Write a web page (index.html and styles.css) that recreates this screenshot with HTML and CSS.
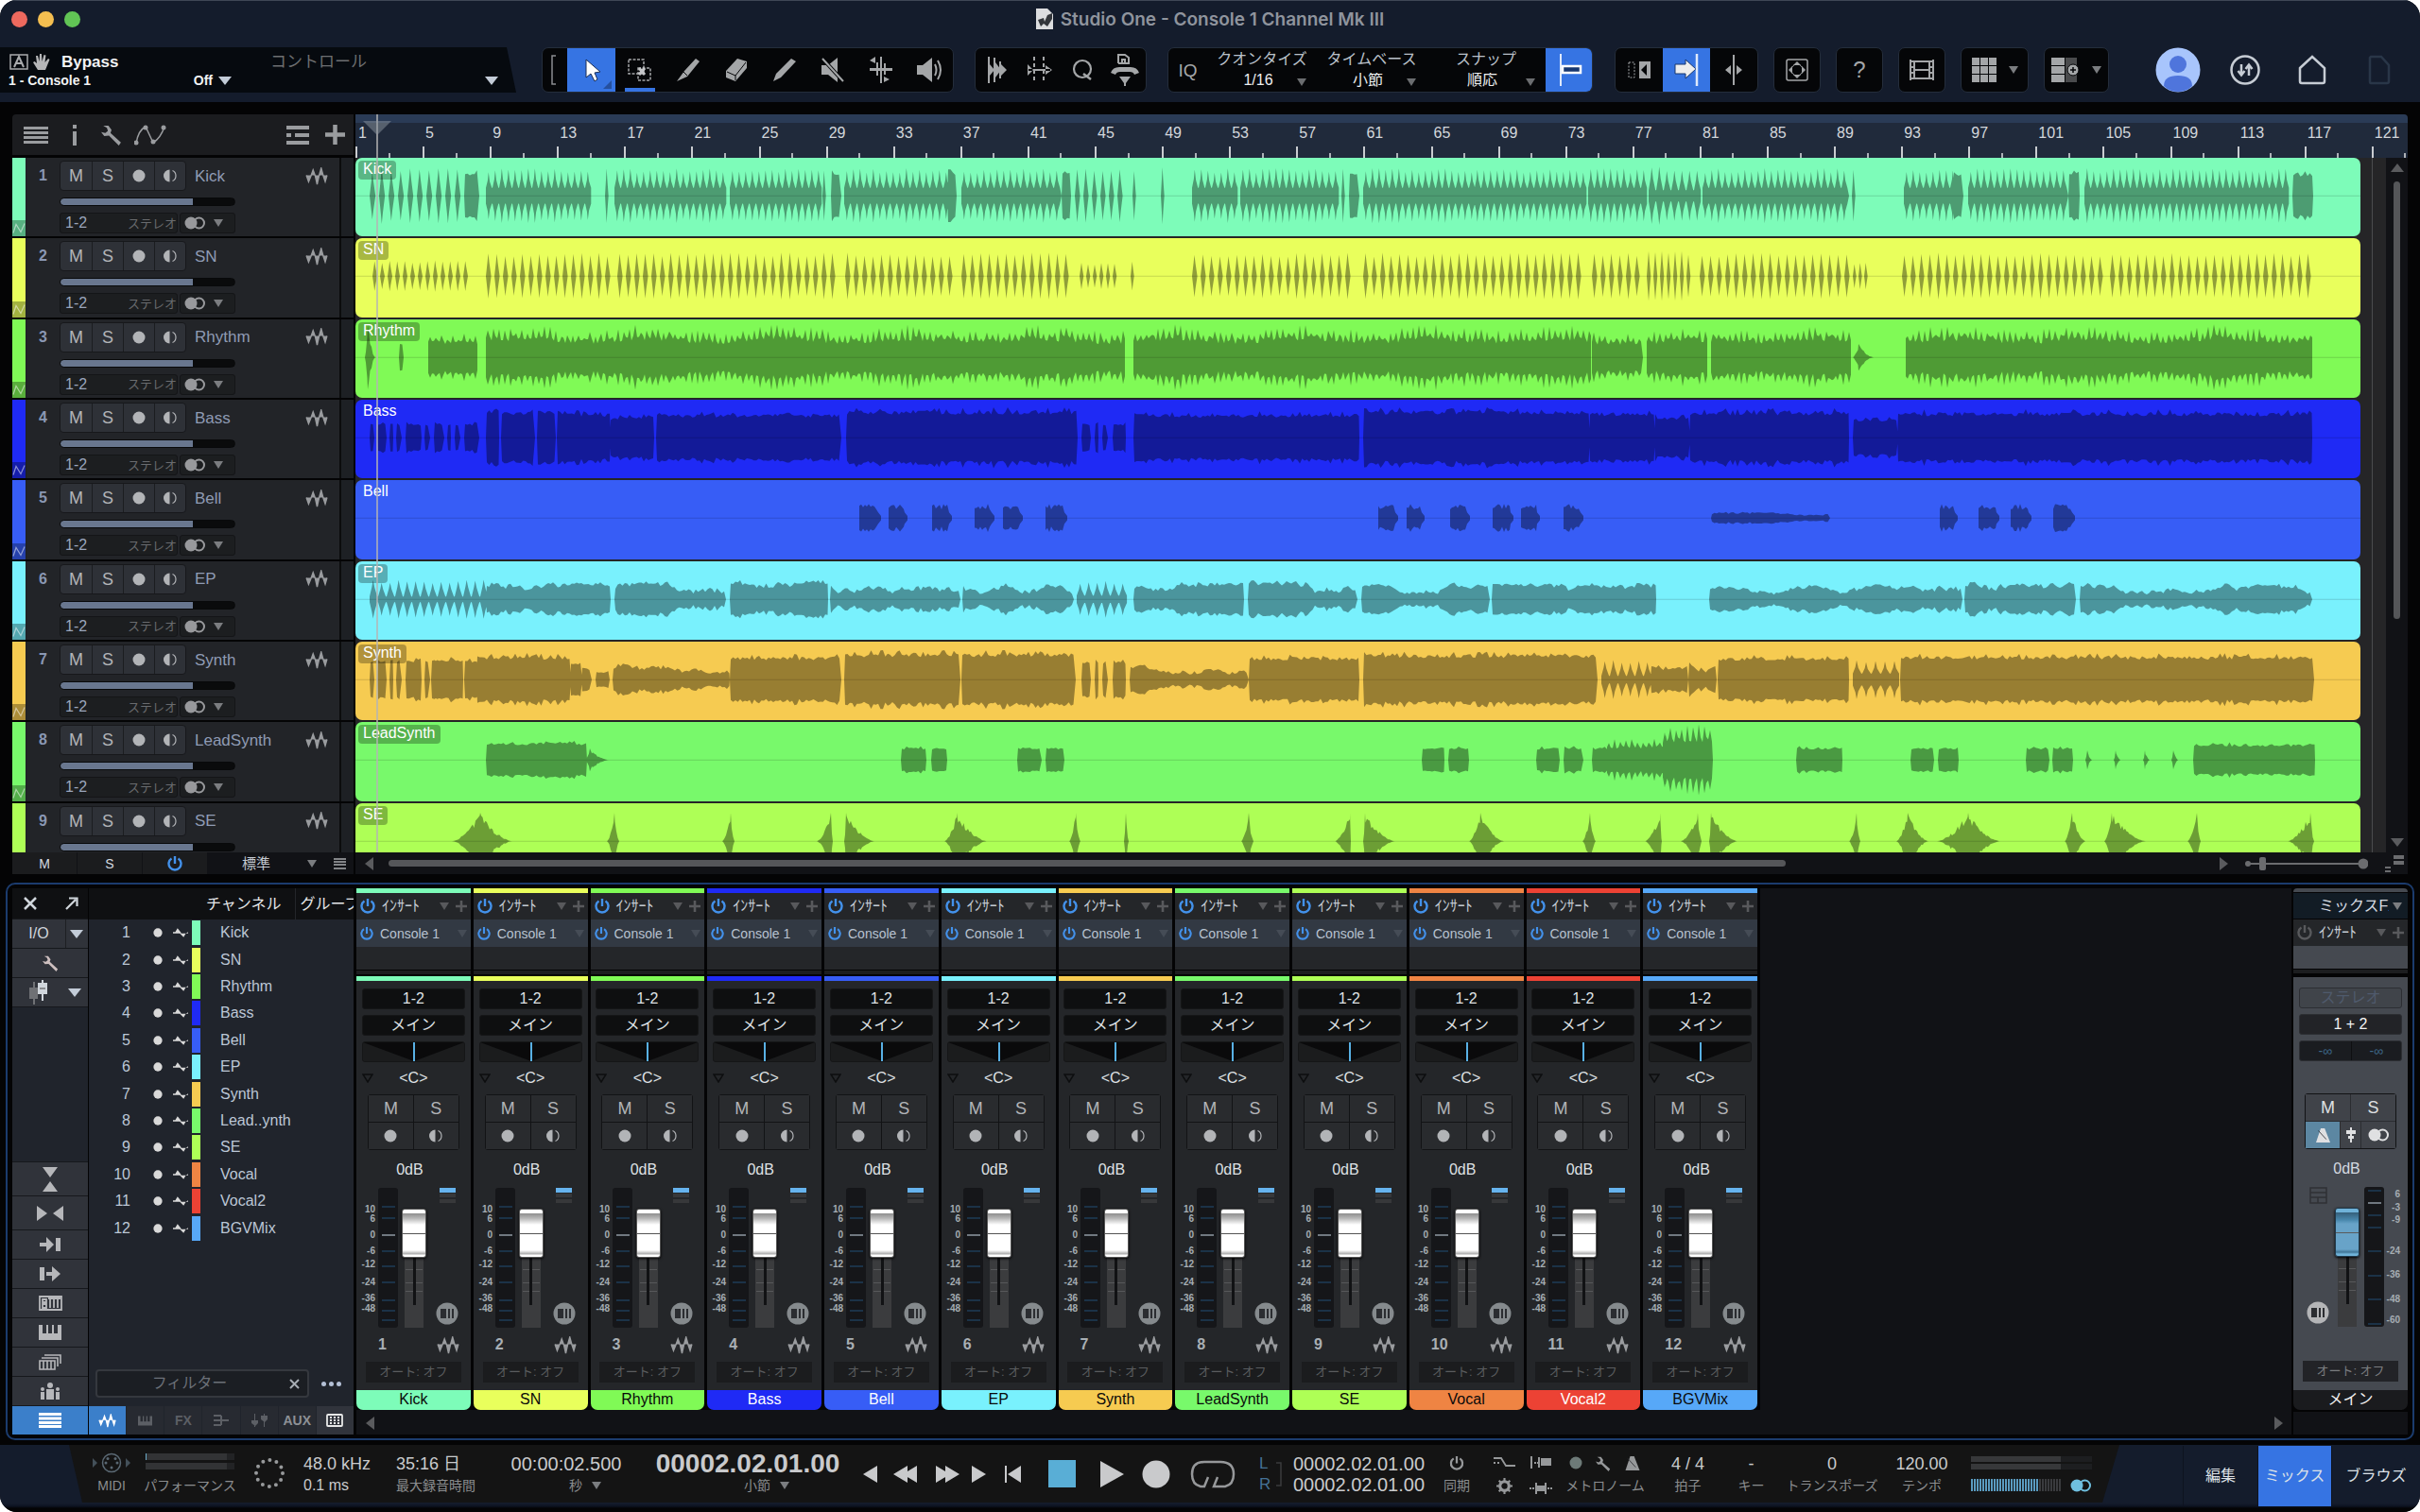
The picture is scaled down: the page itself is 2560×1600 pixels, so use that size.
FILE: index.html
```html
<!DOCTYPE html>
<html lang="ja">
<head>
    <meta charset="UTF-8">
    <meta name="viewport" content="width=device-width, initial-scale=1.0">
    <title>Studio One - Console 1 Channel Mk III</title>
    <link rel="stylesheet" href="styles.css">
</head>
<body>
    <!-- Icon sheet -->
    <svg class="icon-sheet" aria-hidden="true">
        <symbol id="i-wave" viewBox="0 0 24 20"><path d="M0.500 9L3 16L5.500 10L8 3L10.500 10L12.500 19L14.500 10L17 1L19.500 10L21.500 16L23.500 9" stroke="currentColor" stroke-width="1.500"/></symbol>
        <symbol id="i-dot" viewBox="0 0 14 14"><circle cx="7" cy="7" r="6.500"/></symbol>
        <symbol id="i-mon" viewBox="0 0 14 14"><path d="M6.500 0.500A6.500 6.500 0 0 0 6.500 13.500Z"/><path d="M9.500 1.500Q13 3 13 7Q13 11 9.500 12.500" fill="none" stroke="currentColor" stroke-width="1.200"/></symbol>
        <symbol id="i-stereo" viewBox="0 0 24 14"><circle cx="8" cy="7" r="6.500"/><circle cx="16.500" cy="7" r="5.500" fill="none" stroke="currentColor" stroke-width="2"/></symbol>
        <symbol id="i-power" viewBox="0 0 16 16"><path d="M4.500 2.500A6.500 6.500 0 1 0 11.500 2.500M8 0V8" fill="none" stroke="currentColor" stroke-width="2.400"/></symbol>
        <symbol id="i-wrench" viewBox="0 0 20 20"><path d="M2 1L7 1L10 5L9 8L19 17L17 20L7.500 10.500L3 11L0 7L4 8L6.500 6L5.500 3Z"/></symbol>
        <symbol id="i-rack" viewBox="0 0 24 24"><circle cx="12" cy="12" r="11.500"/><path d="M5 7h6v10H5zM13 7h2v10h-2zM17 7h2v10h-2z" class="ink"/></symbol>
        <symbol id="i-plus" viewBox="0 0 14 14"><path d="M5.500 0h3v5.500H14v3H8.500V14h-3V8.500H0v-3h5.500z"/></symbol>
        <symbol id="i-sine" viewBox="0 0 20 12"><path d="M0 7V5L3 5L6 0L10 5L11 7H17L20 5V7L17 7L14 12L9 7Z"/></symbol>
        <symbol id="i-metro" viewBox="0 0 18 18"><path d="M6 0h5l7 18H0z"/><path d="M3 3L13 14" class="ink-line"/></symbol>
        <symbol id="i-auto" viewBox="0 0 14 14"><path d="M1 12L4 3L9 11L13 2" fill="none" stroke="#fff" stroke-opacity=".5" stroke-width="1.200"/></symbol>
        <symbol id="i-lines" viewBox="0 0 26 18"><path d="M0 0h26v3H0zM0 5h26v3H0zM0 10h26v3H0zM0 15h26v3H0z"/></symbol>
        <symbol id="i-keys" viewBox="0 0 24 16"><path d="M0 0H4V9H8V0H10V9H14V0H16V9H20V0H24V16H0Z"/></symbol>
    </svg>

    <div class="window">
        <header class="top">
            <div class="titlebar">
                <div class="lights"><i class="red"></i><i class="amber"></i><i class="green"></i></div>
                <h1>
                    <svg width="18" height="22" viewBox="0 0 18 22"><path d="M0 0h12l6 6v16H0z" fill="#dcdddf"/><path d="M2 12l6-2 1 4 3-7 5-2v6l-5 8-4-3-3 3z" fill="#33363b"/></svg>
                    Studio One - Console 1 Channel Mk III
                </h1>
            </div>
            <div class="toolbar">
                <div class="param">
                    <div class="param-name">
                        <svg width="20" height="17" viewBox="0 0 20 17"><rect x="1" y="1" width="18" height="15" fill="none" stroke="#a9abad" stroke-width="1.500"/><path d="M5 14L10 3L15 14M7 10H13" fill="none" stroke="#a9abad" stroke-width="2"/></svg>
                        <svg width="18" height="17" viewBox="0 0 18 17"><path d="M5 17L0 9L1.500 8L4 10L3 2L5 2L6.500 8L7 0H9L9.500 8L11.500 1L13.500 1.500L12.500 9L16 5L17.500 6L13 17Z" fill="#b5b6b8"/></svg>
                        <b>Bypass</b>
                    </div>
                    <div class="param-val"><b>1 - Console 1</b><b class="off">Off</b><i class="tri big"></i></div>
                    <span class="control">コントロール</span>
                    <i class="tri big last"></i>
                </div>

                <div class="group tools">
                    <svg width="26" height="46" viewBox="0 0 26 46"><path d="M14 8H10V38H14" fill="none" stroke="#8b8d90" stroke-width="1.500"/></svg>
                    <button class="tool on" aria-label="矢印"><svg width="50" height="46" viewBox="0 0 50 46"><path d="M19 12V31L24 27L28 35L31 33L28 26L34 25Z" fill="#fff" stroke="#1a2d55"/><path d="M46 34V43H37Z" fill="#25509f"/></svg></button>
                    <button class="tool tabbed" aria-label="範囲"><svg width="28" height="26" viewBox="0 0 28 26"><path d="M2 2H18V17H2ZM12 11H25V24H12Z" fill="none" stroke="#a4a6a8" stroke-width="1.500" stroke-dasharray="3 1.500"/><path d="M13 11L19 18M19 11L13 18" stroke="#c4c5c7" stroke-width="3"/></svg></button>
                    <button class="tool" aria-label="分割"><svg width="26" height="26" viewBox="0 0 26 26"><path d="M21 1L25 4L12 20L1 25L9 14Z"/><path d="M8 15L12 19" stroke="#050608"/></svg></button>
                    <button class="tool" aria-label="消しゴム"><svg width="26" height="24" viewBox="0 0 26 24"><path d="M14 0L24 3V10L12 24L2 20V13Z"/><path d="M3 14L12 18L23 4M12 18V23" stroke="#050608" fill="none"/></svg></button>
                    <button class="tool" aria-label="ペイント"><svg width="26" height="26" viewBox="0 0 26 26"><path d="M20 1L25 4L9 21L1 25L4 17Z"/></svg></button>
                    <button class="tool" aria-label="ミュート"><svg width="26" height="26" viewBox="0 0 26 26"><path d="M1 8H8L18 0V26L8 18H1Z"/><path d="M2 1L24 25" stroke="#050608" stroke-width="4"/><path d="M2 1L24 25" stroke="#a4a6a8" stroke-width="2"/></svg></button>
                    <button class="tool" aria-label="ベンド"><svg width="26" height="28" viewBox="0 0 26 28"><path d="M12 0h2v28h-2zM8 6h2v14H8zM16 7h2v12h-2zM1 12h24v3H1zM7 0v7l-6-3zM16 21l6 3-6 3z"/></svg></button>
                    <button class="tool" aria-label="試聴"><svg width="28" height="26" viewBox="0 0 28 26"><path d="M1 8H7L17 0V26L7 18H1Z"/><path d="M20 7Q23 13 20 19M23 3Q29 13 23 23" fill="none" stroke="#a4a6a8" stroke-width="2"/></svg></button>
                </div>

                <div class="group edits">
                    <button class="tool" aria-label="トランジェント"><svg width="22" height="30" viewBox="0 0 22 30"><path d="M1 1h2v28H1zM7 2h2v26H7zM13 6h2v18h-2zM3 9l5 6-5 6zM9 7l6 8-6 8zM15 9l6 6-6 6z"/></svg></button>
                    <button class="tool" aria-label="ストレッチ"><svg width="28" height="28" viewBox="0 0 28 28"><path d="M8 0V28M18 0V28" stroke="#a4a6a8" stroke-width="2" stroke-dasharray="4 3"/><path d="M1 8v12l6-6zM27 14l-7-5v10zM2 13h23v2H2z"/></svg></button>
                    <button class="tool" aria-label="クオンタイズ適用"><svg width="22" height="24" viewBox="0 0 22 24"><circle cx="11" cy="11" r="9" fill="none" stroke="#a4a6a8" stroke-width="2.200"/><path d="M12 16L20 22" stroke="#a4a6a8" stroke-width="2.500"/></svg></button>
                    <button class="tool" aria-label="マクロ"><svg width="32" height="34" viewBox="0 0 32 34"><path d="M9 10V1h7l4 3v6H9M13 10V6h3v4" fill="none" stroke="#a4a6a8" stroke-width="2"/><path d="M1 20Q3 14 10 14H22Q29 14 31 20L26 22Q25 19 21 19H11Q7 19 6 22ZM10 24H22L17 31V34H15V31Z"/></svg></button>
                </div>

                <div class="group quant">
                    <span class="iq">IQ</span>
                    <label class="pick">クオンタイズ<select><option>1/16</option></select></label>
                    <label class="pick">タイムベース<select><option>小節</option></select></label>
                    <label class="pick wide">スナップ<select><option>順応</option></select></label>
                    <button class="tool on" aria-label="スナップ切替"><svg width="28" height="36" viewBox="0 0 28 36"><path d="M5 1V35" stroke="#dfe9fb" stroke-width="2"/><path d="M7 14H26V21H7Z" fill="#17376f" stroke="#fff" stroke-width="2.500"/></svg></button>
                </div>

                <div class="group follow">
                    <button class="tool" aria-label="オートスクロール"><svg width="26" height="20" viewBox="0 0 26 20"><path d="M2 2H8V18H2Z" fill="none" stroke="#a4a6a8" stroke-dasharray="2 1.500"/><path d="M13 1H25V19H13Z"/><path d="M21 4V16L15 10Z" fill="#050608"/></svg></button>
                    <button class="tool on" aria-label="カーソル追従"><svg width="28" height="34" viewBox="0 0 28 34"><path d="M2 11H13V6L24 16L13 26V21H2Z" fill="#eee" stroke="#17376f"/><path d="M25 0V34" stroke="#dfe9fb" stroke-width="2.500"/></svg></button>
                    <button class="tool" aria-label="カーソル"><svg width="20" height="32" viewBox="0 0 20 32"><path d="M9 0h2v32H9zM7 11v10l-6-5zM13 11v10l6-5z"/></svg></button>
                </div>
                <button class="group solo" aria-label="ズーム"><svg width="24" height="24" viewBox="0 0 24 24"><rect x="1" y="1" width="22" height="22" rx="2" fill="none" stroke="#a4a6a8" stroke-width="1.500"/><circle cx="12" cy="12" r="6" fill="none" stroke="#a4a6a8"/><path d="M12 3l4 4H8zM12 21l4-4H8zM3 12l4-4v8zM21 12l-4-4v8z"/></svg></button>
                <button class="group solo help">?</button>
                <button class="group solo" aria-label="ビデオ"><svg width="28" height="24" viewBox="0 0 28 24"><path d="M2 1V23M6 2V22M22 2V22M26 1V23M6 3H22M6 12H22M6 21H22M2 3H6M2 9H6M2 15H6M2 21H6M22 3H26M22 9H26M22 15H26M22 21H26" fill="none" stroke="#a4a6a8" stroke-width="2"/></svg></button>
                <button class="group duo" aria-label="表示"><svg width="26" height="26" viewBox="0 0 26 26"><path d="M0 0h8v8H0zM9 0h8v8H9zM18 0h8v8h-8zM0 9h8v8H0zM9 9h8v8H9zM18 9h8v8h-8zM0 18h8v8H0zM9 18h8v8H9zM18 18h8v8h-8z"/></svg><i class="tri"></i></button>
                <button class="group duo" aria-label="トラック追加"><svg width="30" height="26" viewBox="0 0 30 26"><path d="M0 0h14v8H0zM0 9h14v8H0zM0 18h14v8H0z"/><path d="M15 0h12v26H15z" fill="#4a4b4d"/><circle cx="23" cy="13" r="6" stroke="#050608"/><path d="M20 13h6M23 10v6" stroke="#050608" stroke-width="1.500"/></svg><i class="tri"></i></button>

                <nav class="account">
                    <a href="#" aria-label="ユーザー"><svg width="48" height="48" viewBox="0 0 48 48"><circle cx="24" cy="24" r="23.500" fill="#a8c5fc"/><circle cx="24" cy="18" r="9" fill="#4f75dc"/><path d="M9 41Q9 30 24 30Q39 30 39 41Q33 47 24 47Q15 47 9 41Z" fill="#4f75dc"/></svg></a>
                    <a href="#" aria-label="転送"><svg width="32" height="32" viewBox="0 0 32 32"><circle cx="16" cy="16" r="14.500" fill="none" stroke="#c6ccd4" stroke-width="2.500"/><path d="M12 10V21M8.500 17L12 21.500L15.500 17M20 22V11M16.500 15L20 10.500L23.500 15" fill="none" stroke="#c6ccd4" stroke-width="2.500"/></svg></a>
                    <a href="#" aria-label="ホーム"><svg width="30" height="32" viewBox="0 0 30 32"><path d="M2 14L15 2L28 14V28Q28 30 26 30H4Q2 30 2 28Z" fill="none" stroke="#c6ccd4" stroke-width="2.500"/></svg></a>
                    <a href="#" aria-label="ソング"><svg width="24" height="32" viewBox="0 0 24 32"><path d="M3 2H14L22 11V28Q22 30 20 30H3Q2 30 2 28V3Z" fill="none" stroke="#293648" stroke-width="2.500"/></svg></a>
                </nav>
            </div>
        </header>

        <!-- Arrange view -->
        <main class="arrange">
            <section class="tracks-col">
                <div class="tracks-head">
                    <svg width="26" height="18"><use href="#i-lines"/></svg>
                    <svg class="info" width="6" height="22" viewBox="0 0 6 22"><path d="M1 0h4v4H1zM1 7h4v15H1z"/></svg>
                    <svg class="wr" width="22" height="22"><use href="#i-wrench"/></svg>
                    <svg width="34" height="22" viewBox="0 0 34 22"><path d="M2 20Q4 6 12 2L20 19Q28 14 32 2" fill="none" stroke="#9a9c9f" stroke-width="1.500"/><circle cx="2" cy="19" r="2.500"/><circle cx="12" cy="3" r="2.500"/><circle cx="20" cy="18" r="2.500"/><circle cx="31" cy="3" r="2.500"/></svg>
                    <svg class="push" width="24" height="20" viewBox="0 0 24 20"><path d="M0 0h24v4H0zM0 8h5v4H0zM9 8h15v4H9zM0 16h24v4H0z"/></svg>
                    <svg width="21" height="21"><use href="#i-plus"/></svg>
                </div>
                <div class="clipper"><div class="track-list" id="track-list"></div></div>
                <div class="tracks-foot">
                    <button>M</button><button>S</button><button aria-label="電源" class="blue"><svg width="16" height="16"><use href="#i-power"/></svg></button>
                    <div class="size"><span>標準</span><i class="tri"></i><svg width="13" height="12" viewBox="0 0 13 12"><path d="M0 0h13v2H0zM0 3h13v2H0zM0 6h13v2H0zM0 10h13v2H0z"/></svg></div>
                </div>
            </section>
            <section class="timeline">
                <div class="ruler" id="ruler"></div>
                <div class="lanes">
                    <div class="clipper"><div class="lane-list" id="lane-list"></div></div>
                    <div class="v-scroll"><i class="arrow up"></i><i class="thumb"></i><i class="arrow down"></i></div>
                </div>
                <div class="h-scroll">
                    <i class="arrow left"></i><div class="h-rail"><i></i></div><i class="arrow right"></i>
                    <svg width="130" height="14" viewBox="0 0 130 14"><path d="M5 6h120v2H5z"/><circle cx="3" cy="7" r="3"/><circle cx="125" cy="7" r="5.500"/><rect x="15" y="0" width="7" height="14" rx="2"/></svg>
                    <svg width="20" height="20" viewBox="0 0 20 20"><path d="M9 1h11v4H9zM9 7h11v4H9zM0 13h6v2H0zM0 17h6v2H0z"/></svg>
                </div>
                <div class="playhead"><i></i></div>
            </section>
        </main>

        <!-- Console -->
        <section class="mixer">
            <div class="side">
                <div class="side-head">
                    <svg width="16" height="16" viewBox="0 0 16 16"><path d="M2 2L14 14M14 2L2 14" stroke="#d0d6dc" stroke-width="2.500"/></svg>
                    <svg width="14" height="14" viewBox="0 0 14 14"><path d="M1 13L11 3M4 1.500H12.500V10" fill="none" stroke="#d0d6dc" stroke-width="2.200"/></svg>
                </div>
                <button class="split"><span>I/O</span><em><i class="tri big"></i></em></button>
                <button aria-label="設定" class="warm"><svg width="17" height="17"><use href="#i-wrench"/></svg></button>
                <button class="split" aria-label="フェーダー"><span><svg width="20" height="26" viewBox="0 0 20 26"><path d="M4 2h2v24H4zM0 8h9v12H0z" fill="#6f7175"/><path d="M13 0h2v22h-2zM9 3h10v12H9z"/><path d="M11 9h6" stroke="#444"/></svg></span><em class="bare"><i class="tri big"></i></em></button>
                <div class="side-fill"></div>
                <button class="tall" aria-label="縦"><svg width="16" height="26" viewBox="0 0 16 26"><path d="M0 0h16l-8 11zM0 26h16l-8-11z"/></svg></button>
                <button class="tall" aria-label="横"><svg width="28" height="16" viewBox="0 0 28 16"><path d="M0 0v16l11-8zM28 0v16l-11-8z"/></svg></button>
                <button aria-label="入力"><svg width="23" height="16" viewBox="0 0 23 16"><path d="M0 6h7V0l8 8-8 8v-6H0zM17 1h5v14h-5z"/></svg></button>
                <button aria-label="出力"><svg width="23" height="16" viewBox="0 0 23 16"><path d="M0 1h5v14H0zM7 6h6V0l9 8-9 8v-6H7z"/></svg></button>
                <button aria-label="外部"><svg width="25" height="16" viewBox="0 0 25 16"><path d="M1 1H24V15H1ZM4 4H8V7H4ZM4 9H8V13H4ZM12 4V13M16 4V13M20 4V13M10 3H23" fill="none" stroke="currentColor" stroke-width="1.800"/></svg></button>
                <button aria-label="インストゥルメント"><svg width="24" height="16"><use href="#i-keys"/></svg></button>
                <button aria-label="バンク"><svg width="24" height="17" viewBox="0 0 24 17"><path d="M1 7H17V16H1ZM5 7V16M9 7V16M13 7V16M3 4H20V13M6 1H23V10" fill="none" stroke="currentColor" stroke-width="1.600"/></svg></button>
                <button aria-label="グループ"><svg width="22" height="18" viewBox="0 0 22 18"><circle cx="11" cy="3" r="3"/><path d="M7 7h8v11H7zM1 10h4v8H1zM17 10h4v8h-4z"/><circle cx="3" cy="7" r="2"/><circle cx="19" cy="7" r="2"/></svg></button>
                <button class="on" aria-label="リスト"><svg width="24" height="16" viewBox="0 0 24 16"><path d="M0 0h24v3H0zM0 4.500h24v3H0zM0 9h24v3H0zM0 13h24v3H0z"/></svg></button>
            </div>

            <div class="chan-list">
                <table>
                    <colgroup><col class="c-num"><col class="c-icons"><col class="c-bar"><col class="c-text"><col></colgroup>
                    <thead><tr><th class="c-name" colspan="4">チャンネル</th><th class="c-group">グループ</th></tr></thead>
                    <tbody id="chan-rows"></tbody>
                </table>
                <div class="filter">
                    <label><input type="text" placeholder="フィルター" aria-label="フィルター"><svg width="11" height="11" viewBox="0 0 11 11"><path d="M1 1L10 10M10 1L1 10" stroke="#a7adb4" stroke-width="2"/></svg></label>
                    <span class="more"><i></i><i></i><i></i></span>
                </div>
                <div class="tabs">
                    <button class="on" aria-label="オーディオ"><svg width="19" height="15"><use href="#i-wave"/></svg></button>
                    <button aria-label="鍵盤"><svg width="15" height="11"><use href="#i-keys"/></svg></button>
                    <button>FX</button>
                    <button aria-label="バス"><svg width="16" height="12" viewBox="0 0 16 12"><path d="M0 1h8M0 6h16M0 11h8M8 1v10" fill="none" stroke="currentColor" stroke-width="2"/></svg></button>
                    <button aria-label="VCA"><svg width="17" height="14" viewBox="0 0 17 14"><path d="M3 0h1v14H3zM0 7h7v3l-3 3-4-3zM13 0h1v14h-1zM10 2h7v4l-3 3-4-3z"/></svg></button>
                    <button class="aux">AUX</button>
                    <button class="lit" aria-label="グリッド"><svg width="18" height="14" viewBox="0 0 18 14"><rect x="1" y="1" width="16" height="12" rx="1" fill="none" stroke="currentColor" stroke-width="1.800"/><path d="M4 3h2v2H4zM8 3h2v2H8zM12 3h2v2h-2zM4 6h2v2H4zM8 6h2v2H8zM12 6h2v2h-2zM4 9h2v2H4zM8 9h2v2H8zM12 9h2v2h-2z"/></svg></button>
                </div>
            </div>

            <div class="bank">
                <div class="strips" id="strips"></div>
                <div class="bank-scroll"><i class="arrow left"></i><i class="arrow right"></i></div>
            </div>

            <div class="main-out">
                <div class="mfx"><span>ミックスFX</span><i class="tri"></i></div>
                <div class="ins"><svg width="16" height="16"><use href="#i-power"/></svg><span>ｲﾝｻｰﾄ</span><i class="tri"></i><svg width="12" height="12"><use href="#i-plus"/></svg></div>
                <div class="rack-empty"></div>
                <div class="rack-line"></div>
                <div class="body">
                    <button class="slot faint">ステレオ</button>
                    <button class="slot">1 + 2</button>
                    <div class="slot peaks"><span>-∞</span><span>-∞</span></div>
                    <div class="ms">
                        <button>M</button><button>S</button>
                        <div class="trio"><button class="on" aria-label="メトロノーム"><svg width="17" height="15"><use href="#i-metro"/></svg></button><button aria-label="リンク"><svg width="10" height="16" viewBox="0 0 10 16"><path d="M4 0h2v16H4zM0 3h10v4H0zM2 9h6v3H2z"/></svg></button><button aria-label="ステレオ"><svg width="24" height="14"><use href="#i-stereo"/></svg></button></div>
                    </div>
                    <div class="db">0dB</div>
                    <div class="fader-zone">
                        <div class="left-icons">
                            <svg width="19" height="18" viewBox="0 0 19 18"><path d="M1 1H18V17H1ZM1 6H18M1 11H18M9 11V17" fill="none" stroke="#2f3135" stroke-width="1.500"/></svg>
                            <svg width="24" height="24"><use href="#i-rack"/></svg>
                        </div>
                        <input class="fader" type="range" value="77" aria-label="メイン 音量">
                        <svg class="meter" width="44" height="148" id="main-meter"></svg>
                    </div>
                    <div class="auto">オート: オフ</div>
                </div>
                <div class="chan-name">メイン</div>
                <div class="under"></div>
            </div>
        </section>

        <!-- Transport -->
        <footer class="bottom">
            <div class="transport">
                <div class="cell w-midi"><svg width="40" height="22" viewBox="0 0 40 22"><circle cx="20" cy="11" r="9.500" fill="none" stroke="#5a6873" stroke-width="1.500"/><path d="M0 6v10l5-5zM35 6l5 5-5 5z" fill="#435059"/><g fill="#5a6873"><circle cx="14" cy="11" r="1.500"/><circle cx="16" cy="6.500" r="1.500"/><circle cx="24" cy="6.500" r="1.500"/><circle cx="26" cy="11" r="1.500"/><circle cx="20" cy="16" r="1.500"/></g></svg><small>MIDI</small></div>
                <div class="cell w-perf"><svg width="94" height="20" viewBox="0 0 94 20"><path d="M0 1h94v7H0zM0 11h94v7H0z" fill="#222325"/><path d="M0 1h86v7H0zM0 11h86v7H0z" fill="#323335"/><path d="M0 1h1v7H0z" fill="#6aaac8"/></svg><small>パフォーマンス</small></div>
                <div class="cell w-ring"><svg width="34" height="34" viewBox="0 0 34 34"><circle cx="17" cy="17" r="14" fill="none" stroke="#97999b" stroke-width="4" stroke-linecap="round" stroke-dasharray="0 7.330"/></svg></div>
                <div class="cell w-rate start"><span>48.0 kHz</span><small class="bright">0.1 ms</small></div>
                <div class="cell w-rec start"><span>35:16 日</span><small>最大録音時間</small></div>
                <div class="cell w-time"><span class="clock">00:00:02.500</span><small class="pad">秒<i class="tri"></i></small></div>
                <div class="cell w-pos"><b>00002.02.01.00</b><small class="pad">小節<i class="tri"></i></small></div>
                <div class="keys">
                    <button aria-label="戻る"><svg width="38" height="28" viewBox="0 0 38 28"><path d="M26 5v18L11 14z"/></svg></button>
                    <button aria-label="巻き戻し"><svg width="38" height="28" viewBox="0 0 38 28"><path d="M20 5v18L5 14zM30 5v18L15 14z"/></svg></button>
                    <button aria-label="早送り"><svg width="38" height="28" viewBox="0 0 38 28"><path d="M12 5v18l15-9zM22 5v18l15-9z"/></svg></button>
                    <button aria-label="進む"><svg width="38" height="28" viewBox="0 0 38 28"><path d="M12 5v18l15-9z"/></svg></button>
                    <button aria-label="先頭へ"><svg width="38" height="28" viewBox="0 0 38 28"><path d="M9 5h2v18H9zM26 5v18L12 14z"/></svg></button>
                    <button class="stop" aria-label="停止"><svg width="62" height="30" viewBox="0 0 62 30"><path d="M17 0h29v29H17z"/></svg></button>
                    <button aria-label="再生"><svg width="44" height="30" viewBox="0 0 44 30"><path d="M10 1v28l25-14z"/></svg></button>
                    <button aria-label="録音"><svg width="50" height="30" viewBox="0 0 50 30"><circle cx="25" cy="15" r="14.500"/></svg></button>
                    <button aria-label="ループ"><svg width="70" height="30" viewBox="0 0 70 30"><path d="M30 18L26 28H22Q13 26 13 15Q13 2 26 2H43Q57 2 57 15Q57 26 48 28H36L40 18" fill="none" stroke="#96989a" stroke-width="2.500"/></svg></button>
                </div>
                <div class="locators">
                    <span class="lr"><em>L</em><em>R</em></span>
                    <svg width="6" height="26" viewBox="0 0 6 26"><path d="M0 1H5V25H0" fill="none" stroke="#3a3b3d" stroke-width="1.500"/></svg>
                    <span class="nums"><em>00002.02.01.00</em><em>00002.02.01.00</em></span>
                </div>
                <div class="cell w-sync"><svg class="g" width="16" height="15"><use href="#i-power"/></svg><small>同期</small></div>
                <div class="cell w-sync"><svg class="g" width="24" height="12" viewBox="0 0 24 12"><path d="M1 2H9L14 10H24M1 7H3M5 7H7" fill="none" stroke="#96989a" stroke-width="1.800"/></svg><svg class="g" width="17" height="17" viewBox="0 0 16 16"><circle cx="8" cy="8" r="4.500" fill="none" stroke="#96989a" stroke-width="3"/><path d="M8 0V3M8 13V16M0 8H3M13 8H16M2.500 2.500L4.500 4.500M11.500 11.500L13.500 13.500M13.500 2.500L11.500 4.500M2.500 13.500L4.500 11.500" stroke="#96989a" stroke-width="2"/></svg></div>
                <div class="cell w-punch"><svg class="g" width="22" height="13" viewBox="0 0 22 13"><path d="M0 0h2v13H0zM4 6h2v2H4zM7 6h3v2H7zM8 1h2v11H8zM11 2h11v8H11z"/></svg><svg class="g" width="24" height="12" viewBox="0 0 24 12"><path d="M0 5h2v2H0zM3 5h2v2H3zM6 0h2v12H6zM8 3h8v6H8zM16 0h2v12h-2zM19 5h2v2h-2zM22 5h2v2h-2z"/></svg></div>
                <div class="cell w-metro"><div class="trip"><svg width="14" height="14" class="teal"><use href="#i-dot"/></svg><svg width="16" height="16" class="g"><use href="#i-wrench"/></svg><svg width="18" height="15" class="g"><use href="#i-metro"/></svg></div><small>メトロノーム</small></div>
                <div class="cell w-sig"><span>4 / 4</span><small>拍子</small></div>
                <div class="cell w-sig"><span>-</span><small>キー</small></div>
                <div class="cell w-trans"><span>0</span><small>トランスポーズ</small></div>
                <div class="cell w-tempo"><span>120.00</span><small>テンポ</small></div>
                <div class="levels">
                    <svg width="128" height="38" viewBox="0 0 128 38" id="levels"></svg>
                    <svg width="24" height="14" class="cyan"><use href="#i-stereo"/></svg>
                </div>
            </div>
            <nav class="views">
                <button>編集</button><button class="on">ミックス</button><button>ブラウズ</button>
            </nav>
        </footer>
    </div>

    <script src="script.js"></script>
</body>
</html>
```
FILE: styles.css
```css
* {
    box-sizing: border-box;
}

body {
    margin: 0;
    background: #fff;
    color: #d5dae0;
    font-family: "Liberation Sans", "Noto Sans CJK JP", sans-serif;
    font-size: 16px;
    line-height: 1;
    white-space: nowrap;
}

button, select, input {
    font: inherit;
    color: inherit;
    margin: 0;
    padding: 0;
    border: 0;
    border-radius: 0;
    background: none;
}

button {
    display: flex;
    align-items: center;
    justify-content: center;
}

svg {
    display: block;
    flex: none;
    fill: currentColor;
}

em, i {
    font-style: normal;
}

.icon-sheet {
    position: absolute;
    width: 0;
    height: 0;
}

.ink { fill: #2b2d31; }
.ink-line { stroke: #2b2d31; stroke-width: 1; }

.window {
    display: flex;
    flex-direction: column;
    height: 100vh;
    overflow: hidden;
    background: #040405;
    border-radius: 18px;
}

/* Small arrows */
.tri {
    flex: none;
    border: 5px solid transparent;
    border-top: 8px solid #7b7d80;
    border-bottom: 0;
}

.tri.big {
    border-width: 7px;
    border-top: 9px solid #c3ccd8;
    border-bottom: 0;
}

.arrow {
    flex: none;
    border: 7px solid transparent;
}

.arrow.up { border-top: 0; border-bottom: 9px solid #5a5b5e; }
.arrow.down { border-bottom: 0; border-top: 9px solid #5a5b5e; }
.arrow.left { border-left: 0; border-right: 9px solid #5a5b5e; }
.arrow.right { border-right: 0; border-left: 9px solid #5a5b5e; }

/* Title bar and toolbar */
.top {
    flex: none;
    height: 108px;
    background: #141c2c;
    border-top: 1px solid #3f4756;
}

.titlebar {
    position: relative;
    display: flex;
    justify-content: center;
    align-items: center;
    height: 38px;
    margin-bottom: 11px;
}

.titlebar h1 {
    display: flex;
    align-items: center;
    gap: 8px;
    margin: 0;
    font: 600 19px Inter, sans-serif;
    color: #8f949d;
}

.lights {
    position: absolute;
    left: 12px;
    display: flex;
    gap: 11px;
}

.lights i {
    width: 17px;
    height: 17px;
    border-radius: 50%;
}

.red { background: #ed695e; }
.amber { background: #f4be50; }
.green { background: #61c455; }

.toolbar {
    display: flex;
    height: 48px;
}

.param {
    display: grid;
    grid-template-columns: 286px 1fr 24px;
    grid-template-rows: 30px 18px;
    align-items: center;
    width: 546px;
    margin-right: 27px;
    padding-right: 9px;
    background: #060a0f;
    clip-path: polygon(0 0, 536px 0, 100% 100%, 0 100%);
    color: #f2f3f4;
}

.param-name {
    display: flex;
    align-items: center;
    gap: 5px;
    padding-left: 10px;
    font-size: 17px;
}

.param-name b {
    margin-left: 7px;
}

.param-val {
    grid-row: 2;
    display: flex;
    align-items: center;
    padding: 0 0 8px 9px;
    font-size: 14px;
}

.param-val .off {
    margin: 0 6px 0 auto;
}

.param-val .tri {
    margin-right: 41px;
}

.control {
    font-size: 17px;
    color: #6d6f71;
}

.param .last {
    grid-area: 2 / 3;
    justify-self: start;
    margin-bottom: 8px;
}

.group {
    display: flex;
    flex: none;
    align-items: center;
    height: 48px;
    background: #050608;
    border: 1px solid #242d3b;
    border-radius: 7px;
    overflow: hidden;
    color: #a4a6a8;
}

.tool {
    flex: none;
    height: 46px;
}

.tools .tool { width: 51px; }
.edits .tool { width: 45px; }
.follow .tool { width: 50px; }

.tool.on {
    background: #3674e3;
}

.tabbed {
    background: linear-gradient(#3674e3, #3674e3) center bottom / 32px 4px no-repeat;
}

.edits, .quant { margin-left: 22px; }
.follow { margin-left: 23px; }
.edits { width: 182px; }

.iq {
    width: 41px;
    text-align: center;
    font-size: 19px;
}

.pick {
    position: relative;
    display: flex;
    flex-direction: column;
    align-items: center;
    gap: 6px;
    width: 116px;
    color: #b9c0c8;
}

.pick.wide {
    width: 126px;
}

.pick select {
    appearance: none;
    width: 100%;
    height: 17px;
    padding-right: 8px;
    color: #eceeef;
    text-align: center;
    text-align-last: center;
}

.pick::after {
    content: "";
    position: absolute;
    right: 11px;
    bottom: 3px;
    border: 5px solid transparent;
    border-top: 8px solid #6b6d70;
    border-bottom: 0;
}

.quant .tool {
    width: 49px;
}

.solo, .duo {
    margin-left: 16px;
    width: 50px;
}

.duo {
    width: 72px;
    gap: 13px;
}

.duo:last-of-type {
    width: 69px;
}

.help {
    font-size: 24px;
}

.account {
    display: flex;
    align-items: center;
    margin-left: auto;
    padding-right: 8px;
}

.account a {
    display: flex;
    justify-content: center;
    width: 71px;
}

/* Arrange */
.arrange {
    flex: 1;
    display: flex;
    min-height: 0;
    margin: 13px 13px 0;
}

.tracks-col {
    display: flex;
    flex: none;
    flex-direction: column;
    width: 361px;
    margin-right: 2px;
}

.tracks-head {
    display: flex;
    flex: none;
    align-items: center;
    height: 43px;
    margin-bottom: 3px;
    padding: 0 9px 0 12px;
    background: #1b1c1f;
    border-radius: 4px 0 0 0;
    color: #9a9c9f;
}

.info { margin: 0 25px; }
.wr { margin-right: 13px; }
.push { margin: 0 17px 0 auto; }

.clipper {
    flex: 1;
    min-width: 0;
    min-height: 0;
    overflow: hidden;
}

.track-list, .lane-list {
    display: grid;
    grid-template-rows: repeat(9, minmax(0, 1fr));
    height: 768px;
}

.track {
    display: grid;
    grid-template-columns: 14px 1fr 13px;
    margin-bottom: 2px;
    background: #1d2024;
}

.tag {
    display: flex;
    align-items: flex-end;
}

.tag svg {
    height: 17px;
    background: rgba(0, 0, 0, .3);
}

.track-body {
    display: flex;
    flex-direction: column;
    gap: 7px;
    margin-left: 1px;
    padding: 3px 12px 0 35px;
    background: #222428;
    border-right: 2px solid #0b0c0d;
}

.track-top {
    display: flex;
    align-items: center;
    height: 32px;
}

.num {
    width: 22px;
    margin-left: -22px;
    font-weight: bold;
    color: #8a97b3;
}

.btns {
    display: grid;
    grid-template-columns: repeat(4, 1fr);
    width: 134px;
    height: 32px;
    background: #2e3137;
    border: 1px solid #17181b;
    border-radius: 4px;
    color: #b2b4b7;
    font-size: 18px;
}

.btns button + button {
    border-left: 1px solid #1b1d20;
}

.t-name {
    margin: 0 auto 0 9px;
    font-size: 17px;
    color: #8f9bb4;
}

.track-top > svg {
    color: #9a9c9f;
}

.vol {
    appearance: none;
    width: 186px;
    height: 9px;
    border: 1px solid #08090a;
    border-radius: 5px;
    background: linear-gradient(90deg, #69778f 76%, #0a0b0c 76%);
}

.vol::-webkit-slider-thumb {
    appearance: none;
    width: 4px;
    height: 9px;
}

.track-out {
    display: flex;
    gap: 2px;
    height: 22px;
    font-size: 16px;
}

.track-out > * {
    display: flex;
    align-items: center;
    background: #1c1e20;
    border: 1px solid #141517;
    border-radius: 3px;
}

.out {
    justify-content: space-between;
    width: 125px;
    padding-left: 5px;
    color: #9aa5bb;
    overflow: hidden;
}

.out small {
    font-size: 13px;
    color: #696b6e;
}

.st {
    gap: 8px;
    width: 59px;
    padding-left: 3px;
    color: #98999c;
}

.tracks-foot {
    display: flex;
    flex: none;
    height: 23px;
    background: #111216;
}

.tracks-foot button {
    width: 68px;
    margin-right: 1px;
    background: #1b1c1e;
    font-size: 14px;
}

.tracks-foot .blue, .blue {
    color: #4391ea;
}

.size {
    display: flex;
    flex: 1;
    align-items: center;
    padding: 0 8px 0 36px;
    color: #838588;
    font-size: 15px;
}

.size span {
    margin-right: auto;
    color: #c3c9d0;
}

.size svg {
    margin-left: 18px;
}

.timeline {
    position: relative;
    display: flex;
    flex: 1;
    flex-direction: column;
    min-width: 0;
}

.ruler {
    display: grid;
    flex: none;
    grid-template-columns: repeat(31, 3.275%);
    height: 46px;
    background: linear-gradient(#2a3b56 9px, #202a3b 9px);
    border-radius: 0 4px 0 0;
    color: #d3d7dc;
    overflow: hidden;
}

.bar {
    padding: 12px 0 0 3px;
    background:
        linear-gradient(#c9ccd0, #c9ccd0) left bottom / 2px 12px no-repeat,
        linear-gradient(#aeb2b8, #aeb2b8) center bottom / 2px 5px no-repeat;
}

.lanes {
    display: flex;
    flex: 1;
    min-height: 0;
}

.lanes > .clipper {
    background: linear-gradient(90deg, transparent calc(100% - 15px), #4a4b4d 0, #4a4b4d calc(100% - 14px), transparent 0) #252527;
}

.lane {
    position: relative;
    margin: 0 27px 2px 0;
    border-radius: 7px;
    overflow: hidden;
}

.lane svg {
    width: 100%;
    height: 100%;
    fill: rgba(0, 0, 0, .38);
}

.lane span {
    position: absolute;
    top: 3px;
    left: 3px;
    padding: 1px 5px 3px;
    border-radius: 4px;
    background: rgba(0, 0, 0, .28);
    color: #fff;
    font-size: 16px;
}

.lane .plain {
    background: none;
}

.v-scroll {
    display: flex;
    flex-direction: column;
    align-items: center;
    width: 23px;
    padding: 6px 0;
    background: #111216;
}

.v-scroll .thumb {
    width: 7px;
    height: 64%;
    margin: 10px 0 auto;
    border-radius: 4px;
    background: #555659;
}

.h-scroll {
    display: flex;
    flex: none;
    align-items: center;
    gap: 18px;
    height: 23px;
    padding: 0 4px 0 10px;
    background: #111216;
    color: #6b6c6f;
}

.h-rail {
    flex: 1;
    margin-left: -2px;
}

.h-rail i {
    display: block;
    width: 77%;
    height: 7px;
    border-radius: 4px;
    background: #555659;
}

.playhead {
    position: absolute;
    top: 0;
    bottom: 23px;
    left: 22px;
    width: 2px;
    background: rgba(180, 180, 180, .75);
}

.playhead i {
    position: absolute;
    top: 7px;
    left: -14px;
    border: 15px solid transparent;
    border-top: 15px solid rgba(140, 150, 160, .5);
    border-bottom: 0;
}

/* Mixer */
.mixer {
    display: flex;
    flex: none;
    height: 590px;
    margin: 9px 6px 5px;
    padding: 4px 5px;
    border: 2px solid #1b3b6d;
    border-radius: 10px;
}

.side {
    display: flex;
    flex: none;
    flex-direction: column;
    gap: 1px;
    width: 80px;
    margin-right: 1px;
    background: #16181c;
}

.side-head {
    display: flex;
    align-items: center;
    justify-content: space-between;
    height: 32px;
    padding: 0 10px 0 11px;
    background: #0f1012;
}

.side button {
    height: 30px;
    background: #30333a;
    color: #b6b7ba;
}

.side .split {
    justify-content: space-between;
    color: #d0d6dc;
}

.side .split span {
    display: flex;
    flex: 1;
    justify-content: center;
}

.side .split em {
    display: flex;
    align-items: center;
    height: 100%;
    padding: 0 5px 0 4px;
    border-left: 1px solid #1d1f23;
}

.side .split .bare {
    padding-right: 7px;
    border: 0;
}

.side .warm {
    color: #cdbfbf;
}

.side-fill {
    flex: 1;
    background: #20242c;
}

.side .tall {
    height: 35px;
}

.side .on, .tabs .on {
    background: #3b7fca;
    color: #fff;
}

.chan-list {
    display: flex;
    flex: none;
    flex-direction: column;
    width: 280px;
    margin-right: 3px;
    background: #20242c;
    overflow: hidden;
}

.chan-list table {
    table-layout: fixed;
    width: 300px;
    height: 374px;
    border-collapse: collapse;
}

.chan-list th {
    height: 33px;
    padding: 0;
    background: #0f1012;
    font-weight: normal;
    color: #e4e6e8;
}

.chan-list .c-name {
    padding-right: 14px;
    text-align: right;
}

.chan-list .c-group {
    padding-left: 5px;
    border-left: 1px solid #24262a;
    text-align: left;
}

.chan-list td {
    padding: 0;
    color: #bcc7d6;
}

.c-num { width: 44px; }
.c-icons { width: 65px; }
.c-bar { width: 9px; }
.c-text { width: 100px; }

td.c-num {
    text-align: right;
}

.c-icons div {
    display: flex;
    align-items: center;
    gap: 11px;
    padding-left: 24px;
    color: #d9d9d9;
}

.c-bar i {
    display: block;
    height: 26px;
}

.chan-list td.c-text {
    padding-left: 21px;
}

.filter {
    display: flex;
    align-items: center;
    margin: auto 0 9px 7px;
}

.filter label {
    display: flex;
    align-items: center;
    width: 226px;
    height: 30px;
    padding-right: 8px;
    background: #1b1e23;
    border: 2px solid #35383e;
    border-radius: 4px;
}

.filter input {
    flex: 1;
    min-width: 0;
    padding-right: 8px;
    text-align: center;
    outline: 0;
}

.filter input::placeholder {
    color: #6b7078;
}

.more {
    display: flex;
    gap: 3px;
    margin: 0 auto;
}

.more i {
    width: 5px;
    height: 5px;
    border-radius: 50%;
    background: #b4c0d6;
}

.tabs {
    display: flex;
    gap: 1px;
}

.tabs button {
    flex: 1;
    height: 30px;
    background: #272a31;
    color: #5c5f65;
    font-size: 14px;
    font-weight: bold;
}

.tabs .on {
    color: #fff;
    background: #3b7fca;
}

.tabs .aux {
    color: #8d9095;
}

.tabs .lit {
    background: #31343c;
    color: #e8e8e8;
}

.bank {
    display: flex;
    flex: 1;
    flex-direction: column;
    min-width: 0;
    margin-right: 2px;
    background: #111216;
    overflow: hidden;
}

.strips {
    display: grid;
    grid-template-columns: repeat(12, 1fr);
    gap: 3px;
    width: 1485px;
    padding-right: 3px;
    background: #040405;
}

.strip {
    background: #040405;
    color: #dfe1e4;
}

.strip-bar {
    height: 5px;
}

.ins, .plug {
    display: flex;
    align-items: center;
    gap: 7px;
    height: 28px;
    padding: 0 4px 0 4px;
    background: #242629;
    color: #4391ea;
}

.ins span {
    margin-right: auto;
    color: #c3cad2;
}

.ins .tri + svg {
    color: #58595c;
}

.ins .tri {
    border-top-color: #58595c;
}

.plug {
    height: 29px;
    background: #323943;
    font-size: 14px;
}

.plug span {
    margin-right: auto;
    color: #b8c2d0;
}

.plug .tri {
    border-top-color: #454c56;
}

.rack-empty {
    height: 24px;
    margin-bottom: 1px;
    background: #242629;
}

.rack-line {
    height: 4px;
    margin-bottom: 2px;
    background: #1c1d1f;
}

.body {
    display: flex;
    flex-direction: column;
    align-items: center;
    padding: 8px 0 8px;
    background: #242629;
}

.slot {
    width: 109px;
    height: 22px;
    margin-bottom: 6px;
    background: #0e0f10;
    border: 1px solid #151617;
    border-radius: 3px;
}

.pan {
    margin-bottom: 0;
    background: #1b1c1d;
}

.pan-val {
    display: flex;
    align-items: center;
    width: 109px;
    height: 34px;
    color: #dfe1e4;
}

.pan-val span {
    flex: 1;
    padding-right: 12px;
    text-align: center;
}

.ms {
    display: grid;
    grid-template-columns: 1fr 1fr;
    grid-template-rows: 1fr 1fr;
    gap: 1px;
    width: 97px;
    height: 59px;
    background: #121315;
    border: 1px solid #121315;
    border-radius: 3px;
    color: #b2b4b7;
    font-size: 18px;
}

.ms button {
    background: #292b2e;
}

.db {
    height: 40px;
    margin-right: 8px;
    line-height: 41px;
}

.fader-zone {
    display: flex;
    width: 100%;
    height: 148px;
}

.meter {
    font-size: 10px;
    font-weight: bold;
    fill: #a5adb3;
}

.fader {
    appearance: none;
    writing-mode: vertical-lr;
    direction: rtl;
    width: 26px;
    height: 148px;
    margin: 0 10px 0 4px;
    background:
        linear-gradient(#111214, #111214) center 60px / 3px 64px no-repeat,
        linear-gradient(#57585a, #57585a) center 86px / 18px 1px no-repeat,
        linear-gradient(#57585a, #57585a) center 100px / 18px 1px no-repeat,
        linear-gradient(#57585a, #57585a) center 109px / 18px 1px no-repeat,
        linear-gradient(#3b3c3e, #3b3c3e) center 60px / 20px 88px no-repeat;
}

.fader::-webkit-slider-thumb {
    appearance: none;
    width: 26px;
    height: 52px;
    border: 1px solid #555;
    border-radius: 3px;
    background: linear-gradient(#fff 4px, #8e8e8e 4px, #b5b5b5 9px, #fff 16px, #fff 25px, #555 25px, #555 26px, #fff 26px, #fff 43px, #a9a9a9 47px, #fff 48px);
    box-shadow: 0 1px 3px #000;
}

.right-icons, .left-icons {
    display: flex;
    flex-direction: column;
    align-items: center;
    justify-content: space-between;
    padding-bottom: 3px;
    color: #858a8d;
}

.num-row {
    display: flex;
    align-items: center;
    justify-content: space-between;
    width: 100%;
    height: 36px;
    padding: 0 12px 0 23px;
    font-weight: bold;
    color: #a9afb4;
}

.num-row svg {
    color: #9a9c9f;
}

.auto {
    width: 101px;
    height: 22px;
    background: #1b1c1e;
    color: #5a5c5f;
    font-size: 13px;
    line-height: 21px;
    text-align: center;
}

.chan-name {
    height: 21px;
    border-radius: 0 0 7px 7px;
    color: #0a0a0a;
    line-height: 20px;
    text-align: center;
}

.chan-name.light {
    color: #fff;
}

.bank-scroll {
    display: flex;
    flex: 1;
    align-items: center;
    justify-content: space-between;
    padding: 2px 9px 0 10px;
}

/* Main output */
.main-out {
    display: flex;
    flex: none;
    flex-direction: column;
    width: 121px;
    border-top: 4px solid #454950;
    border-radius: 4px 4px 0 0;
}

.mfx {
    display: flex;
    align-items: center;
    height: 27px;
    margin: 1px 0;
    padding: 0 6px 0 27px;
    background: #121c25;
}

.mfx span {
    flex: 1;
    width: 0;
    overflow: hidden;
}

.mfx .tri {
    margin-left: 4px;
}

.main-out .ins {
    color: #58595c;
}

.main-out .rack-empty {
    background: #454950;
}

.main-out .rack-line {
    margin-bottom: 4px;
}

.main-out .body {
    flex: none;
    height: 437px;
    padding-top: 11px;
    background: #454950;
}

.main-out .slot {
    background: #222327;
    border: 1px solid #2c2e33;
    color: #f2f2f2;
}

.main-out .faint {
    background: #40444a;
    color: #4f5a6c;
}

.main-out .peaks {
    display: grid;
    grid-template-columns: 1fr 1fr;
    align-items: center;
    margin-bottom: 34px;
    background: #1a1c20;
    color: #3c6787;
    font-size: 14px;
    line-height: 20px;
    text-align: center;
}

.peaks span + span {
    border-left: 1px solid #0e0f11;
}

.main-out .ms {
    background: #2b2d31;
    color: #dfe0e2;
}

.main-out .ms button {
    background: #404349;
}

.trio {
    grid-column: 1 / 3;
    display: grid;
    grid-template-columns: 36px 21px 1fr;
    gap: 1px;
}

.main-out .ms .on {
    background: #5c87a2;
}

.main-out .fader {
    margin: 0 5px 0 0;
}

.main-out .fader::-webkit-slider-thumb {
    border-color: #20394b;
    background: linear-gradient(#6fb2d8 4px, #355f7a 4px, #4988ad 12px, #68a3c8 16px, #68a3c8 25px, #5b5b5b 25px, #5b5b5b 26px, #68a3c8 26px, #68a3c8 43px, #3f7596 46px, #6fb2d8 48px);
}

.left-icons {
    width: 44px;
    padding-left: 8px;
    color: #b4b5b7;
}

.main-out .auto {
    margin-top: 36px;
    background: #222327;
    color: #7b7d80;
}

.main-out .chan-name {
    background: #1a1b1e;
    color: #f0f0f0;
}

.under {
    flex: 1;
    margin-top: 2px;
    background: #111216;
}

/* Transport */
.bottom {
    display: flex;
    flex: none;
    height: 71px;
    background: linear-gradient(#141c2c 62px, #0c1220 65px, #040405 67px);
}

.transport {
    display: flex;
    flex: 1;
    align-items: center;
    height: 61px;
    margin-left: 73px;
    padding-left: 15px;
    background: #141414;
    clip-path: polygon(0 0, 100% 0, calc(100% - 18px) 100%, 14px 100%);
    color: #c9cacc;
    font-size: 18px;
}

.cell {
    display: flex;
    flex: none;
    flex-direction: column;
    align-items: center;
    justify-content: space-between;
    height: 44px;
    margin-bottom: 2px;
}

.cell small {
    font-size: 14px;
    line-height: 18px;
    color: #8b8d8f;
}

.cell > span, .cell > b {
    line-height: 24px;
}

.cell b {
    font-size: 28px;
}

.clock {
    font-size: 20px;
}

.cell .bright {
    font-size: 16px;
    color: #c9cacc;
}

.cell .pad {
    display: flex;
    align-items: center;
    gap: 10px;
    padding-left: 40px;
}

.start { align-items: flex-start; padding-left: 5px; }
.w-midi { width: 60px; }
.w-perf { width: 106px; }
.w-ring { width: 62px; justify-content: center; }
.w-rate { width: 98px; }
.w-rec { width: 96px; }
.w-time { width: 178px; }
.w-pos { width: 206px; }
.w-sync { width: 50px; }
.w-punch { width: 28px; }
.w-metro { width: 108px; }
.w-sig { width: 67px; }
.w-trans { width: 104px; }
.w-tempo { width: 86px; }

.w-sync, .w-punch, .w-metro {
    padding-top: 4px;
}

.g { color: #96989a; }
.teal { color: #6d7a78; }
.cyan { color: #6fbfdf; }

.keys {
    display: flex;
    flex: none;
    align-items: center;
    padding-left: 8px;
}

.stop {
    color: #59aed6;
}

.locators {
    display: flex;
    align-items: center;
    width: 198px;
    padding-left: 14px;
    font-size: 20px;
}

.locators em {
    display: block;
    line-height: 22px;
}

.lr {
    width: 18px;
    color: #457296;
    font-size: 17px;
}

.nums {
    margin-left: 12px;
}

.trip {
    display: flex;
    gap: 14px;
}

.levels {
    display: flex;
    align-items: flex-end;
    padding-left: 9px;
}

.levels .cyan {
    margin-left: -24px;
}

.views {
    display: grid;
    flex: none;
    grid-template-columns: 79px 78px 1fr;
    width: 318px;
    height: 65px;
    padding: 1px 0 0 67px;
}

.views button {
    border-left: 1px solid #0d131f;
    color: #dde1e7;
}

.views .on {
    background: #3674e3;
}
```
FILE: script.js
```javascript
const tracks = [
    { name: 'Kick', color: '#7dfcb9' },
    { name: 'SN', color: '#e9ff5c' },
    { name: 'Rhythm', color: '#80fa56' },
    { name: 'Bass', color: '#1f2af5', light: true },
    { name: 'Bell', color: '#375df6', light: true },
    { name: 'EP', color: '#79f1fd' },
    { name: 'Synth', color: '#f6cb51' },
    { name: 'LeadSynth', color: '#78f96b', short: 'Lead..ynth' },
    { name: 'SE', color: '#aeff56' },
    { name: 'Vocal', color: '#ef8443' },
    { name: 'Vocal2', color: '#ec4234', light: true },
    { name: 'BGVMix', color: '#57a8f8' }
];

// Wave data: [type, start, end, height, ...] in clip units (0 - 2121)
// hits: peaks every n units / full: noisy block / rough: block with a moving level / comb: block with peaks / cone: start, end, height, peak position
const intro = [[15, 20], [23, 33], [36, 40], [43, 49], [53, 70], [73, 79], [83, 94], [97, 101], [105, 111], [115, 131]];
const mid = [[768, 778], [782, 786], [790, 796], [801, 815]];
const blocks = (list, h, type = 'full') => list.map(b => [type, b[0], b[1], h]);
const cones = (list, h) => list.map(b => ['cone', b[0], b[1], h, b[2]]);

const waves = [
    [['hits', 15, 112, 29, 10], ['full', 115, 131, 26], ['hits', 138, 245, 28, 7, .3], ['hits', 264, 270, 28, 6], ['hits', 274, 392, 28, 7, .3],
     ['hits', 396, 490, 28, 7, .3], ['hits', 494, 500, 28, 6], ['full', 503, 514, 27], ['hits', 517, 624, 28, 7, .3], ['full', 626, 636, 27], ['hits', 641, 747, 28, 7, .3], ['full', 747, 757, 26],
     ['hits', 761, 810, 29, 9], ['hits', 822, 828, 30, 6], ['hits', 852, 858, 30, 6], ['hits', 885, 933, 28, 7, .3], ['hits', 936, 1040, 28, 7, .3], ['hits', 1043, 1049, 28, 6], ['full', 1051, 1062, 27],
     ['hits', 1066, 1180, 28, 7, .3], ['hits', 1184, 1300, 28, 7, .3], ['hits', 1304, 1364, 28, 7, .3], ['hits', 1368, 1420, 30, 8, .2], ['hits', 1425, 1580, 28, 7, .3], ['hits', 1583, 1589, 31, 6],
     ['hits', 1638, 1690, 28, 7, .3], ['full', 1690, 1701, 27], ['hits', 1706, 1812, 28, 7, .3], ['full', 1812, 1824, 26], ['hits', 1829, 2045, 28, 7, .3], ['full', 2049, 2071, 26]],
    [['hits', 18, 122, 16, 8], ['hits', 138, 268, 24, 9], ['hits', 277, 505, 24, 9], ['hits', 518, 635, 24, 9], ['hits', 641, 756, 24, 9], ['hits', 766, 806, 14, 7], ['hits', 820, 826, 16, 6],
     ['hits', 885, 1054, 24, 9], ['hits', 1066, 1300, 24, 9], ['hits', 1308, 1362, 24, 9], ['hits', 1366, 1416, 26, 7], ['hits', 1422, 1580, 24, 9], ['hits', 1584, 1602, 14, 6], ['hits', 1636, 1850, 24, 9], ['hits', 1856, 2070, 24, 9]],
    [['cone', 10, 21, 34, 13], ['full', 46, 51, 15], ['comb', 77, 129, 29], ['comb', 138, 814, 32], ['comb', 823, 1304, 32], ['comb', 1308, 1362, 28], ['comb', 1366, 1428, 29], ['comb', 1434, 1580, 31], ['cone', 1584, 1606, 14, 1590], ['comb', 1640, 2070, 32]],
    [...blocks(intro, 16), ['full', 138, 152, 32], ['full', 154, 190, 30], ['full', 192, 212, 31], ['full', 213, 270, 28], ['full', 269, 316, 24], ['full', 318, 514, 27], ['full', 519, 764, 31], ...blocks(mid, 16),
     ['full', 823, 1062, 27], ['full', 1066, 1306, 31], ['full', 1305, 1375, 29], ['full', 1374, 1412, 24], ['full', 1411, 1580, 30], ['full', 1584, 1632, 22], ['full', 1631, 2070, 29]],
    [...blocks([[533, 553], [564, 581], [610, 628], [655, 673], [685, 703], [730, 750], [1082, 1100], [1112, 1128], [1158, 1176], [1203, 1222], [1233, 1250], [1278, 1296], [1676, 1692], [1717, 1736], [1751, 1770], [1796, 1816]], 15, 'blob'),
     ['rough', 1434, 1560, 6]],
    [['hits', 15, 134, 20, 9, .15], ['rough', 138, 270, 17], ['rough', 274, 392, 18], ['rough', 396, 500, 19], ['rough', 502, 640, 17], ['rough', 642, 760, 17], ['hits', 763, 815, 19, 9, .2],
     ['rough', 823, 940, 17], ['rough', 944, 1060, 19], ['rough', 1064, 1200, 17], ['rough', 1202, 1376, 16], ['rough', 1432, 1700, 15], ['rough', 1702, 1820, 18], ['rough', 1824, 2070, 16]],
    [...blocks(intro, 23), ['full', 80, 114, 23], ['full', 128, 228, 27], ['full', 227, 240, 20], ['full', 239, 250, 13], ['full', 254, 269, 9], ['rough', 272, 396, 17], ['full', 396, 514, 26], ['full', 517, 640, 30], ['full', 641, 762, 30], ...blocks(mid, 21),
     ['rough', 819, 945, 15], ['full', 945, 1062, 26], ['full', 1066, 1314, 29], ['hits', 1318, 1370, 20, 9, .2], ['rough', 1370, 1410, 18], ['rough', 1410, 1440, 23], ['full', 1441, 1580, 25], ['hits', 1584, 1632, 21, 10, .3], ['full', 1634, 2072, 27]],
    [['full', 138, 245, 20], ['cone', 243, 268, 12, 248], ...blocks([[577, 604], [609, 626], [700, 726], [730, 750], [1128, 1152], [1156, 1178], [1249, 1274], [1278, 1299], [1524, 1573], [1645, 1670], [1674, 1696], [1767, 1792], [1795, 1817]], 14),
     ['full', 1308, 1326, 14], ['comb', 1324, 1385, 26], ['comb', 1383, 1436, 35], ...cones([[1830, 1837, 1832], [1860, 1867, 1862], [1891, 1898, 1893], [1921, 1928, 1923]], 10), ['full', 1944, 2073, 18]],
    [...cones([[102, 166, 132], [266, 279, 274], [388, 401, 397], [488, 505, 503], [517, 549, 519], [623, 668, 636], [755, 767, 762], [813, 818, 815], [937, 950, 945], [1036, 1053, 1052], [1066, 1100, 1068],
     [1178, 1215, 1190], [1298, 1312, 1306], [1364, 1382, 1380], [1402, 1424, 1420], [1432, 1462, 1434], [1580, 1592, 1588], [1630, 1664, 1642], [1673, 1740, 1706], [1808, 1830, 1816], [1850, 1894, 1858], [1938, 1952, 1948], [2044, 2072, 2068]], 30)]
];

// Small seeded generator so the waves are always the same
let seed = 7;
function rnd() {
    seed = (seed * 16807) % 2147483647;
    return seed / 2147483647;
}

function segment([type, a, b, h, opt, base]) {
    const pts = [[a, 0]];
    if (type === 'hits') {
        for (let x = a; x < b - 1; x += opt) {
            const top = h * (.86 + rnd() * .18);
            const low = h * (base || 0);
            const w = opt * (base ? .9 : .62);
            pts.push([x, low], [x + w * .3, top * .65], [x + w * .45, top], [x + w * .65, top * .6], [x + w, low]);
        }
    } else if (type === 'comb') {
        for (let x = a; x < b; x += 6) {
            const swell = 1 + .1 * Math.sin(x / 22);
            pts.push([x, h * (.48 + rnd() * .2) * swell], [x + 2, h * (.7 + rnd() * .3) * swell], [x + 4, h * (.5 + rnd() * .2) * swell]);
        }
    } else if (type === 'cone') {
        for (let x = a + 1; x < b; x += 1.5) {
            const t = x < opt ? (x - a) / Math.max(opt - a, 1) : (b - x) / (b - opt);
            pts.push([x, h * Math.pow(t, 1.6) * (.65 + rnd() * .35)]);
        }
        pts.push([opt, h]);
        pts.sort((p, q) => p[0] - q[0]);
    } else if (type === 'blob') {
        for (let x = a; x < b; x += 2) {
            pts.push([x, h * (.6 + rnd() * .4)]);
        }
        pts.push([b, h * .4], [b + 3, h * .15]);
    } else if (type === 'rough') {
        let level = .8;
        for (let x = a + 1; x < b; x += 2.5) {
            level = Math.min(.95, Math.max(.4, level + (rnd() - .5) * .3));
            pts.push([x, h * (level + (rnd() - .4) * .2)]);
        }
    } else {
        for (let x = a + 1; x < b; x += 2.5) {
            pts.push([x, h * (.78 + rnd() * .14 + (rnd() > .8 ? .12 : 0))]);
        }
    }
    pts.push([Math.max(b, pts[pts.length - 1][0]), 0]);
    const line = list => list.map(p => p[0].toFixed(1) + ' ' + p[1].toFixed(1)).join('L');
    const up = pts.map(p => [p[0], 40 - p[1]]);
    const down = pts.map(p => [p[0], 40 + p[1]]).reverse();
    return 'M' + line(up) + 'L' + line(down) + 'Z';
}

const icon = (id, w, h) => `<svg width="${w}" height="${h}"><use href="#i-${id}"/></svg>`;

// Ruler
let ruler = '';
for (let bar = 1; bar <= 121; bar += 4) {
    ruler += `<div class="bar">${bar}</div>`;
}
document.getElementById('ruler').innerHTML = ruler;

// Track headers and clips
tracks.slice(0, 9).forEach((t, i) => {
    document.getElementById('track-list').innerHTML += `
        <div class="track">
            <div class="tag" style="background:${t.color}">${icon('auto', 14, 17)}</div>
            <div class="track-body">
                <div class="track-top">
                    <span class="num">${i + 1}</span>
                    <div class="btns"><button>M</button><button>S</button><button aria-label="録音">${icon('dot', 14, 14)}</button><button aria-label="モニター">${icon('mon', 14, 14)}</button></div>
                    <span class="t-name">${t.name}</span>
                    ${icon('wave', 24, 19)}
                </div>
                <input class="vol" type="range" value="76" aria-label="${t.name} 音量">
                <div class="track-out">
                    <div class="out">1-2<small>ステレオ</small></div>
                    <div class="st">${icon('stereo', 24, 14)}<i class="tri"></i></div>
                </div>
            </div>
        </div>`;
    document.getElementById('lane-list').innerHTML += `
        <div class="lane" style="background:${t.color}">
            <svg viewBox="0 0 2121 83" preserveAspectRatio="none"><path d="M0 39.500H2121V40.500H0Z" opacity=".4"/><path d="${waves[i].map(segment).join('')}"/></svg>
            <span class="${t.light ? 'plain' : ''}">${t.name}</span>
        </div>`;
});

// Meter scale
function scale(labels, lines, textX, meterX) {
    const text = labels.map(l => `<text x="${textX}" y="${l[1] + 4}" text-anchor="end">${l[0]}</text>`).join('');
    const ticks = lines.map((y, i) => `<path d="M${meterX + 4} ${y}h14" stroke="${i === lines.hot ? '#8f9aa3' : '#1e3d57'}" stroke-width="1.500"/>`).join('');
    return `<rect x="${meterX}" y="0" width="21" height="148" rx="3" fill="#151619"/>${ticks}${text}`;
}

const chLines = [20, 32, 50, 67, 83, 100, 119, 130, 140];
chLines.hot = 2;
const chScale = scale([['10', 22], ['6', 32], ['0', 49], ['-6', 66], ['-12', 80], ['-24', 99], ['-36', 116], ['-48', 127]], chLines, 20, 23);
const mainLines = [4, 17, 30, 43, 68, 94, 119, 145];
mainLines.hot = 1;
document.getElementById('main-meter').innerHTML = scale([['6', 7], ['-3', 21], ['-9', 34], ['-24', 67], ['-36', 92], ['-48', 118], ['-60', 140]], mainLines, 38, 0);

// Channel strips and list
tracks.forEach((t, i) => {
    document.getElementById('strips').innerHTML += `
        <div class="strip">
            <div class="strip-bar" style="background:${t.color}"></div>
            <div class="ins">${icon('power', 16, 16)}<span>ｲﾝｻｰﾄ</span><i class="tri"></i>${icon('plus', 12, 12)}</div>
            <div class="plug">${icon('power', 14, 14)}<span>Console 1</span><i class="tri"></i></div>
            <div class="rack-empty"></div>
            <div class="rack-line"></div>
            <div class="strip-bar" style="background:${t.color}"></div>
            <div class="body">
                <button class="slot">1-2</button>
                <button class="slot">メイン</button>
                <svg class="slot pan" viewBox="0 0 107 20" preserveAspectRatio="none"><path d="M0 0H107L54 20Z" fill="#0a0a0b"/><path d="M53 0h2v20h-2z" fill="#58b0e4"/></svg>
                <div class="pan-val"><svg width="12" height="10" viewBox="0 0 12 10"><path d="M1 1H11L6 9Z" fill="none" stroke="#0d0e0f" stroke-width="1.500"/></svg><span>&lt;C&gt;</span></div>
                <div class="ms"><button>M</button><button>S</button><button aria-label="録音">${icon('dot', 14, 14)}</button><button aria-label="モニター">${icon('mon', 14, 14)}</button></div>
                <div class="db">0dB</div>
                <div class="fader-zone">
                    <svg class="meter" width="44" height="148">${chScale}</svg>
                    <input class="fader" type="range" value="77" aria-label="${t.name} 音量">
                    <div class="right-icons">
                        <svg width="17" height="17" viewBox="0 0 17 17"><path d="M0 0h17v5H0z" fill="#66b3ee"/><path d="M0 6h17v4H0zM0 12h17v4H0z" fill="#37383a"/></svg>
                        ${icon('rack', 24, 24)}
                    </div>
                </div>
                <div class="num-row">${i + 1}${icon('wave', 24, 19)}</div>
                <div class="auto">オート: オフ</div>
            </div>
            <div class="chan-name ${t.light ? 'light' : ''}" style="background:${t.color}">${t.name}</div>
        </div>`;
    document.getElementById('chan-rows').innerHTML += `
        <tr>
            <td class="c-num">${i + 1}</td>
            <td class="c-icons"><div>${icon('dot', 10, 10)}${icon('sine', 16, 10)}</div></td>
            <td class="c-bar"><i style="background:${t.color}"></i></td>
            <td class="c-text" colspan="2">${t.short || t.name}</td>
        </tr>`;
});

// Output level bars
let level = '<path d="M0 0h128v6H0zM0 8h128v6H0z" fill="#1d1e20"/><path d="M0 0h95v6H0zM0 8h95v6H0z" fill="#37383a"/>';
for (let x = 0; x < 95; x += 3) {
    level += `<path d="M${x} 24h2v13h-2z" fill="${x < 70 ? '#5a9bc0' : '#3a3b3e'}"/>`;
}
document.getElementById('levels').innerHTML = level;
```
